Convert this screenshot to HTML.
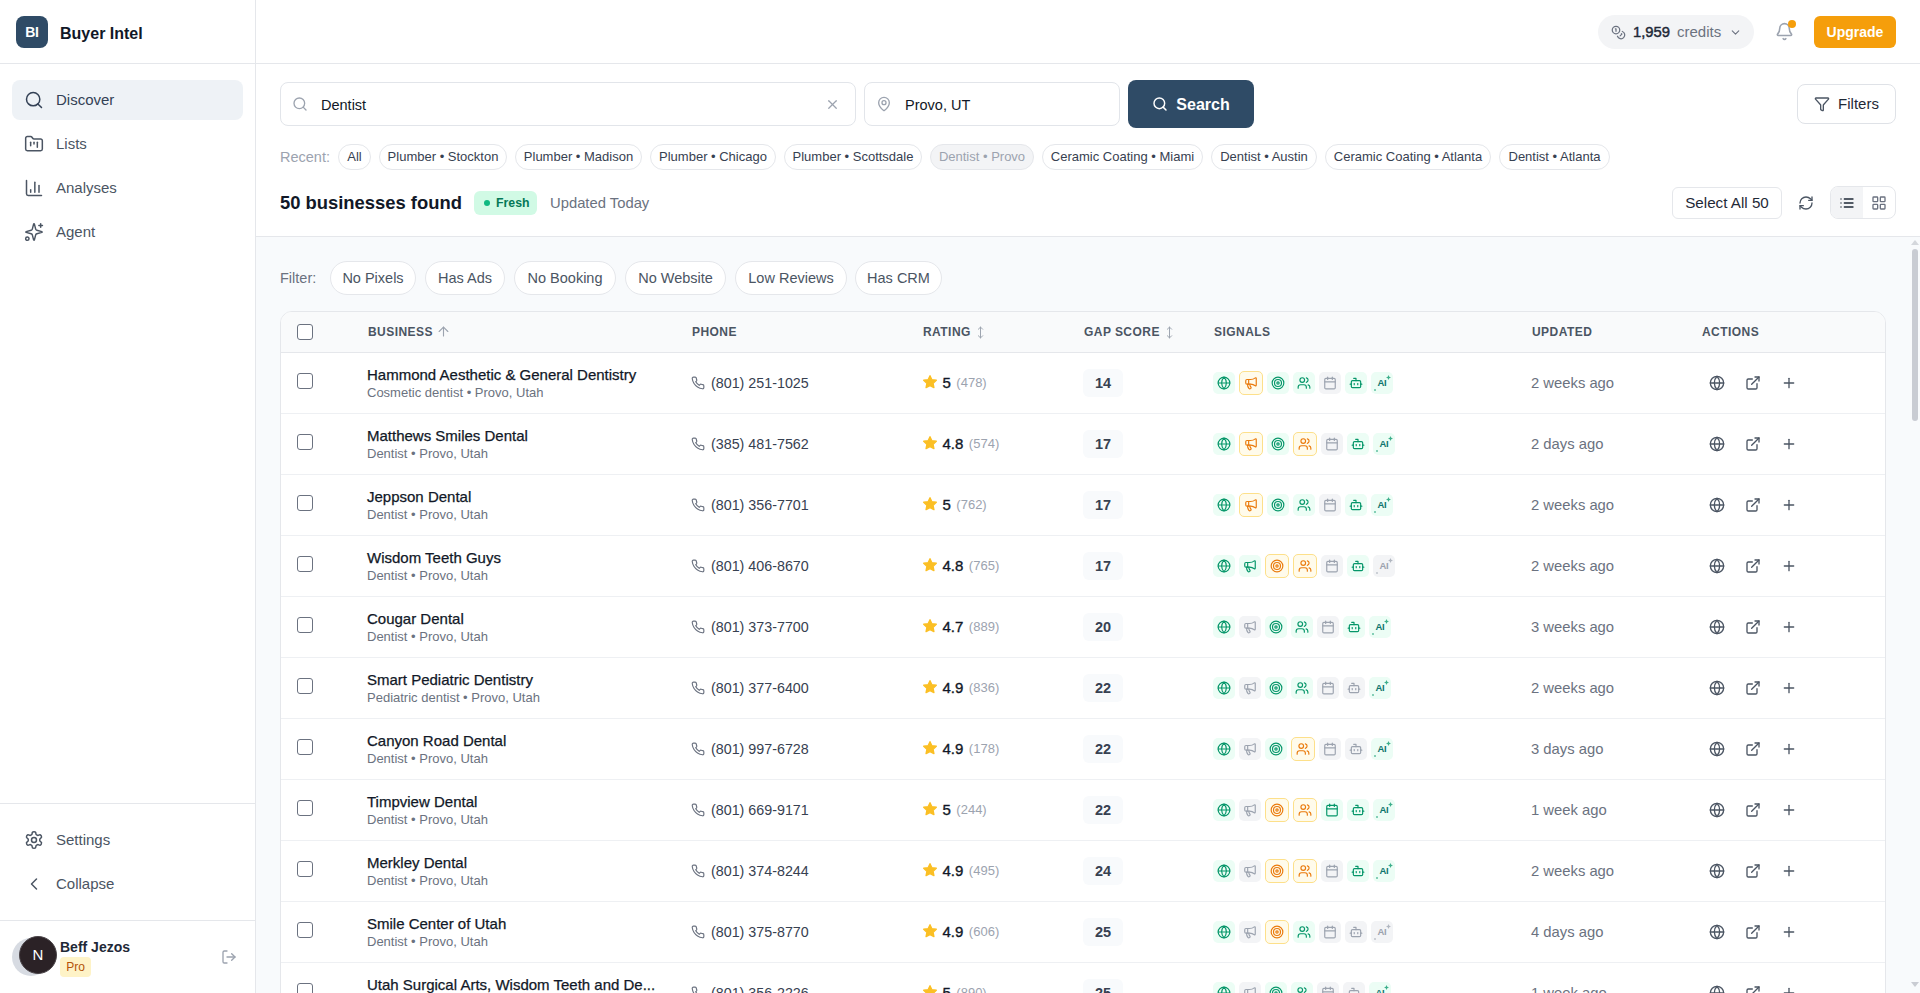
<!DOCTYPE html>
<html><head><meta charset="utf-8"><title>Buyer Intel</title>
<style>
*{box-sizing:border-box;margin:0;padding:0}
html,body{width:1920px;height:993px;overflow:hidden;background:#fff;font-family:"Liberation Sans",sans-serif;color:#111827}
.ic{fill:none;stroke:currentColor;stroke-width:2;stroke-linecap:round;stroke-linejoin:round;display:block;flex:none}
.hline{position:absolute;height:1px;background:#e5e7eb}
#side{position:absolute;left:0;top:0;width:256px;height:993px;border-right:1px solid #e5e7eb;background:#fff}
.logo{position:absolute;left:16px;top:16px;width:32px;height:32px;border-radius:8px;background:#2f4b66;color:#fff;font-weight:700;font-size:14px;line-height:32px;text-align:center;letter-spacing:-0.3px}
.brand{position:absolute;left:60px;top:23.5px;font-size:16px;line-height:20px;font-weight:700;color:#111827}
.nav{position:absolute;left:12px;width:231px;height:40px;border-radius:8px;display:flex;align-items:center;padding-left:12px;padding-bottom:1px;color:#4b5563;font-size:15px}
.nav .ic{width:20px;height:20px;margin-right:12px;stroke-width:1.8}
.nav.act{background:#eef2f6;color:#334155}
.av2{position:absolute;left:12px;top:938px;width:38px;height:38px;border-radius:50%;background:#d7dbe2}
.av{position:absolute;left:19px;top:936px;width:38px;height:38px;border-radius:50%;background:#2b2226;border:1.5px solid #4a4448;color:#fff;font-size:15px;line-height:35px;text-align:center}
.uname{position:absolute;left:60px;top:939px;font-size:14px;line-height:17px;font-weight:700;color:#1f2937}
.pro{position:absolute;left:60px;top:957px;width:31px;height:20px;border-radius:4px;background:#fef3c7;color:#b45309;font-size:12px;line-height:20px;text-align:center}
.logout{position:absolute;left:221px;top:949px;color:#9ca3af}
#hdr{position:absolute;left:256px;top:0;width:1664px;height:64px;border-bottom:1px solid #e5e7eb;background:#fff}
.credits{position:absolute;left:1342px;top:15px;width:156px;height:34px;border-radius:17px;background:#f3f4f6;display:flex;align-items:center;padding-left:14px;font-size:14px}
.credits .coin{color:#6b7280;margin-right:7px;margin-left:-1px;width:15px;height:15px}
.credits b{color:#1f2937;font-weight:400;-webkit-text-stroke:0.45px #1f2937;margin-right:7px;font-size:14.8px;margin-top:-0.5px}
.credits span{color:#6b7280;font-size:15px;margin-top:-1px}
.credits .chev{color:#6b7280;margin-left:8px;width:13px;height:13px}
.bell{position:absolute;left:1519px;top:22px;color:#9ca3af}
.bell i{position:absolute;left:13px;top:-2px;width:8px;height:8px;border-radius:50%;background:#f59e0b}
.upg{position:absolute;left:1558px;top:16px;width:82px;height:32px;border-radius:6px;background:#f59e0b;color:#fff;font-weight:700;font-size:14px;line-height:32px;text-align:center}
#top{position:absolute;left:256px;top:64px;width:1664px;height:173px;border-bottom:1px solid #e5e7eb;background:#fff}
.inp{position:absolute;top:18px;height:44px;border:1px solid #e2e5ea;border-radius:8px;display:flex;align-items:center;padding-left:11px;font-size:14.5px;color:#111827}
.inp .val{margin-top:1.5px}
.inp .sic{color:#9ca3af;margin-right:13px;margin-top:-0.5px}
.inp .xic{position:absolute;right:15.5px;top:14px;color:#9ca3af;width:15px;height:15px}
.sbtn{position:absolute;left:872px;top:16px;width:126px;height:48px;border-radius:8px;background:#2f4b66;color:#fff;display:flex;align-items:center;justify-content:center;font-weight:700;font-size:16px}
.sbtn .ic{margin-right:8px;stroke-width:2.2}
.sbtn span{margin-top:1.5px}
.fbtn{position:absolute;left:1541px;top:20px;width:99px;height:40px;border-radius:8px;border:1px solid #dfe2e7;display:flex;align-items:center;justify-content:center;font-size:15px;color:#1f2937}
.fbtn .ic{margin-right:8px;color:#4b5563}
.fbtn span{margin-top:-1px}
.rlabel{position:absolute;left:24px;top:85px;font-size:14.5px;line-height:16px;color:#9ca3af}
.chip{position:absolute;top:80px;height:26px;border:1px solid #e5e7eb;border-radius:13px;font-size:13px;line-height:24px;text-align:center;color:#374151;white-space:nowrap;background:#fff}
.chip.dis{background:#f3f4f6;color:#9ca3af}
.found{position:absolute;left:24px;top:128px;font-size:18.4px;line-height:22px;font-weight:700;color:#111827}
.fresh{position:absolute;left:218px;top:127px;width:63px;height:24px;border-radius:6px;background:#d1fae5;color:#047857;font-size:12.3px;font-weight:700;line-height:24px;padding-left:22px}
.fresh i{position:absolute;left:10px;top:9px;width:6px;height:6px;border-radius:50%;background:#10b981}
.updt{position:absolute;left:294px;top:131px;font-size:14.8px;line-height:16px;color:#6b7280}
.selall{position:absolute;left:1416px;top:123px;width:110px;height:32px;border:1px solid #e5e7eb;border-radius:6px;font-size:15.2px;line-height:30px;text-align:center;color:#1f2937}
.refr{position:absolute;left:1542px;top:131px;color:#4b5563}
.vt{position:absolute;left:1574px;top:122px;width:66px;height:33px;border:1px solid #e5e7eb;border-radius:8px;display:flex;overflow:hidden}
.vt span{flex:1;display:flex;align-items:center;justify-content:center;color:#6b7280}
.vt span.on{background:#f3f4f6;color:#1f2937}
#main{position:absolute;left:256px;top:237px;width:1664px;height:756px;background:#f8fafc;overflow:hidden}
.flabel{position:absolute;left:24px;top:33px;font-size:14.5px;line-height:16px;color:#6b7280}
.fchip{position:absolute;top:24px;height:34px;border:1px solid #e5e7eb;border-radius:17px;background:#fff;font-size:14.5px;line-height:32px;text-align:center;color:#4b5563;white-space:nowrap}
#card{position:absolute;left:24px;top:74px;width:1606px;height:800px;border:1px solid #e5e7eb;border-radius:12px;background:#fff;overflow:hidden}
.thead{position:absolute;left:0;top:0;width:100%;height:41px;border-bottom:1px solid #e5e7eb;background:#f9fafb}
.cb{position:absolute;width:16px;height:16px;border:1.5px solid #6b7280;border-radius:3px;background:#fff}
.th{position:absolute;top:13px;font-size:12px;line-height:14px;font-weight:700;color:#4b5563;letter-spacing:0.45px;display:flex;align-items:center;white-space:nowrap}
.th .sort{color:#9ca3af;margin-left:3px;width:13px;height:13px;stroke-width:1.8}
.th .sort.up{width:15px;height:15px;margin-top:-1px}
.row{position:absolute;left:0;width:100%;height:61px;border-bottom:1px solid #eef0f3}
.nm{position:absolute;left:86px;top:13px;font-size:15px;line-height:17px;color:#111827;white-space:nowrap;-webkit-text-stroke:0.25px #111827}
.sub{position:absolute;left:86px;top:32px;font-size:13px;line-height:15px;color:#6b7280;white-space:nowrap}
.ph{position:absolute;left:410px;top:22px;display:flex;align-items:center;font-size:14.3px;color:#374151}
.ph .phi{color:#6b7280;margin-right:6px}
.rt{position:absolute;left:641px;top:20.5px;display:flex;align-items:center;font-size:14.5px;white-space:nowrap}
.rt .star{color:#fbbf24;margin-right:5px;width:16px;height:16px;margin-left:-0.5px}
.rt b{font-weight:400;-webkit-text-stroke:0.35px #111827;font-size:15px;color:#111827;margin-right:5.5px}
.rt .cnt{font-size:13px;color:#9ca3af}
.gap{position:absolute;left:802px;top:16px;width:40px;height:28px;border-radius:6px;background:#f8fafc;font-weight:700;font-size:14.5px;line-height:28px;text-align:center;color:#374151}
.sigs{position:absolute;left:932px;top:18px;display:flex;align-items:center;height:24px}
.sig{position:relative;width:22px;height:22px;border-radius:5px;margin-right:4px;display:flex;align-items:center;justify-content:center}
.sig .ic{width:14px;height:14px}
.sg{background:#ecfdf5;color:#059669}
.so{background:#fffbeb;color:#ea7a0c;border:1px solid #fde08a;width:24px;height:24px}
.sn{background:#f3f4f6;color:#9ca3af}
.ai{font-size:9.5px;font-weight:700;letter-spacing:-0.2px;line-height:10px;margin-top:-1px}
.sg .ai{color:#0f766e}
.aisp{position:absolute;right:2.5px;top:2.5px;opacity:.75}
.aidot{position:absolute;left:2.8px;bottom:2.8px;width:2.5px;height:2.5px;border-radius:50%;background:currentColor;opacity:.6}
.upd{position:absolute;left:1250px;top:22px;font-size:14.8px;line-height:16px;color:#6b7280;white-space:nowrap}
.acts{position:absolute;left:1428px;top:22px;display:flex;color:#4b5563}
.acts .ic{margin-right:20px}
.sbar{position:absolute;left:1649px;top:0;width:15px;height:756px}
.thumb{position:absolute;left:7px;top:12px;width:6px;height:172px;border-radius:3px;background:#c9ccd3}
.sup{position:absolute;left:6px;top:3px;width:0;height:0;border-left:4px solid transparent;border-right:4px solid transparent;border-bottom:5px solid #d4d7dc}
.sdn{position:absolute;left:6px;top:745px;width:0;height:0;border-left:4px solid transparent;border-right:4px solid transparent;border-top:5px solid #c9ccd3}

</style></head><body>
<svg width="0" height="0" style="position:absolute">
<defs>
<symbol id="i-search" viewBox="0 0 24 24"><circle cx="11" cy="11" r="8"/><path d="m21 21-4.3-4.3"/></symbol>
<symbol id="i-folder" viewBox="0 0 24 24"><path d="M4 20h16a2 2 0 0 0 2-2V8a2 2 0 0 0-2-2h-7.93a2 2 0 0 1-1.66-.9l-.82-1.2A2 2 0 0 0 7.93 3H4a2 2 0 0 0-2 2v13c0 1.1.9 2 2 2Z"/><path d="M8 10v4"/><path d="M12 10v2"/><path d="M16 10v6"/></symbol>
<symbol id="i-chart" viewBox="0 0 24 24"><path d="M3 3v16a2 2 0 0 0 2 2h16"/><path d="M8 17v-3"/><path d="M13 17V5"/><path d="M18 17V9"/></symbol>
<symbol id="i-spark" viewBox="0 0 24 24"><path transform="translate(12 12) scale(.98) translate(-12 -12)" d="M9.937 15.5A2 2 0 0 0 8.5 14.063l-6.135-1.582a.5.5 0 0 1 0-.962L8.5 9.936A2 2 0 0 0 9.937 8.5l1.582-6.135a.5.5 0 0 1 .963 0L14.063 8.5A2 2 0 0 0 15.5 9.937l6.135 1.581a.5.5 0 0 1 0 .964L15.5 14.063a2 2 0 0 0-1.437 1.437l-1.582 6.135a.5.5 0 0 1-.963 0z"/><path d="M20 2v4.3"/><path d="M17.85 4.15h4.3"/><circle cx="4" cy="20" r="2"/></symbol>
<symbol id="i-gear" viewBox="0 0 24 24"><path d="M12.22 2h-.44a2 2 0 0 0-2 2v.18a2 2 0 0 1-1 1.73l-.43.25a2 2 0 0 1-2 0l-.15-.08a2 2 0 0 0-2.73.73l-.22.38a2 2 0 0 0 .73 2.730l.15.1a2 2 0 0 1 1 1.72v.51a2 2 0 0 1-1 1.74l-.15.09a2 2 0 0 0-.73 2.73l.22.38a2 2 0 0 0 2.73.73l.15-.08a2 2 0 0 1 2 0l.43.25a2 2 0 0 1 1 1.73V20a2 2 0 0 0 2 2h.44a2 2 0 0 0 2-2v-.18a2 2 0 0 1 1-1.73l.43-.25a2 2 0 0 1 2 0l.15.08a2 2 0 0 0 2.73-.73l.22-.39a2 2 0 0 0-.73-2.73l-.15-.08a2 2 0 0 1-1-1.74v-.5a2 2 0 0 1 1-1.74l.15-.09a2 2 0 0 0 .73-2.73l-.22-.38a2 2 0 0 0-2.73-.73l-.15.08a2 2 0 0 1-2 0l-.43-.25a2 2 0 0 1-1-1.730V4a2 2 0 0 0-2-2z"/><circle cx="12" cy="12" r="3"/></symbol>
<symbol id="i-chevl" viewBox="0 0 24 24"><path d="m15 18-6-6 6-6"/></symbol>
<symbol id="i-logout" viewBox="0 0 24 24"><path d="M9 21H5a2 2 0 0 1-2-2V5a2 2 0 0 1 2-2h4"/><path d="m16 17 5-5-5-5"/><path d="M21 12H9"/></symbol>
<symbol id="i-coins" viewBox="0 0 24 24"><circle cx="8" cy="8" r="6"/><path d="M18.09 10.37A6 6 0 1 1 10.34 18"/><path d="M7 6h1v4"/><path d="m16.71 13.88.7.71-2.82 2.82"/></symbol>
<symbol id="i-chevd" viewBox="0 0 24 24"><path d="m6 9 6 6 6-6"/></symbol>
<symbol id="i-bell" viewBox="0 0 24 24"><path d="M10.268 21a2 2 0 0 0 3.464 0"/><path d="M3.262 15.326A1 1 0 0 0 4 17h16a1 1 0 0 0 .74-1.673C19.41 13.956 18 12.499 18 8A6 6 0 0 0 6 8c0 4.499-1.411 5.956-2.738 7.326"/></symbol>
<symbol id="i-x" viewBox="0 0 24 24"><path d="M18 6 6 18"/><path d="m6 6 12 12"/></symbol>
<symbol id="i-pin" viewBox="0 0 24 24"><path d="M20 10c0 4.993-5.539 10.193-7.399 11.799a1 1 0 0 1-1.202 0C9.539 20.193 4 14.993 4 10a8 8 0 0 1 16 0"/><circle cx="12" cy="10" r="3"/></symbol>
<symbol id="i-funnel" viewBox="0 0 24 24"><path d="M10 20a1 1 0 0 0 .553.895l2 1A1 1 0 0 0 14 21v-7a2 2 0 0 1 .517-1.341L21.74 4.67A1 1 0 0 0 21 3H3a1 1 0 0 0-.742 1.67l7.225 7.989A2 2 0 0 1 10 14z"/></symbol>
<symbol id="i-refresh" viewBox="0 0 24 24"><path d="M3 12a9 9 0 0 1 9-9 9.75 9.75 0 0 1 6.74 2.74L21 8"/><path d="M21 3v5h-5"/><path d="M21 12a9 9 0 0 1-9 9 9.75 9.75 0 0 1-6.74-2.74L3 16"/><path d="M8 16H3v5"/></symbol>
<symbol id="i-list" viewBox="0 0 24 24"><path d="M3 12h.01"/><path d="M3 18h.01"/><path d="M3 6h.01"/><path d="M8 12h13"/><path d="M8 18h13"/><path d="M8 6h13"/></symbol>
<symbol id="i-grid" viewBox="0 0 24 24"><rect width="7" height="7" x="3" y="3" rx="1"/><rect width="7" height="7" x="14" y="3" rx="1"/><rect width="7" height="7" x="14" y="14" rx="1"/><rect width="7" height="7" x="3" y="14" rx="1"/></symbol>
<symbol id="i-globe" viewBox="0 0 24 24"><circle cx="12" cy="12" r="10"/><path d="M12 2a14.5 14.5 0 0 0 0 20 14.5 14.5 0 0 0 0-20"/><path d="M2 12h20"/></symbol>
<symbol id="i-mega" viewBox="0 0 24 24"><path d="M11 6a13 13 0 0 0 8.4-2.8A1 1 0 0 1 21 4v12a1 1 0 0 1-1.6.8A13 13 0 0 0 11 14H5a2 2 0 0 1-2-2V8a2 2 0 0 1 2-2z"/><path d="M6 14a12 12 0 0 0 2.4 7.2 2 2 0 0 0 3.2-2.4A8 8 0 0 1 10 14"/><path d="M8 6v8"/></symbol>
<symbol id="i-target" viewBox="0 0 24 24"><circle cx="12" cy="12" r="10"/><circle cx="12" cy="12" r="6"/><circle cx="12" cy="12" r="2"/></symbol>
<symbol id="i-users" viewBox="0 0 24 24"><path d="M16 21v-2a4 4 0 0 0-4-4H6a4 4 0 0 0-4 4v2"/><circle cx="9" cy="7" r="4"/><path d="M22 21v-2a4 4 0 0 0-3-3.87"/><path d="M16 3.13a4 4 0 0 1 0 7.75"/></symbol>
<symbol id="i-cal" viewBox="0 0 24 24"><path d="M8 2v4"/><path d="M16 2v4"/><rect width="18" height="18" x="3" y="4" rx="2"/><path d="M3 10h18"/></symbol>
<symbol id="i-bot" viewBox="0 0 24 24"><path d="M12 8V4H8"/><rect width="16" height="12" x="4" y="8" rx="2"/><path d="M2 14h2"/><path d="M20 14h2"/><path d="M15 13v2"/><path d="M9 13v2"/></symbol>
<symbol id="i-phone" viewBox="0 0 24 24"><path d="M22 16.92v3a2 2 0 0 1-2.18 2 19.79 19.790 0 0 1-8.63-3.07 19.5 19.5 0 0 1-6-6 19.79 19.79 0 0 1-3.07-8.67A2 2 0 0 1 4.11 2h3a2 2 0 0 1 2 1.72 12.84 12.84 0 0 0 .7 2.81 2 2 0 0 1-.45 2.11L8.09 9.91a16 16 0 0 0 6 6l1.270-1.27a2 2 0 0 1 2.11-.45 12.84 12.84 0 0 0 2.81.7A2 2 0 0 1 22 16.92z"/></symbol>
<symbol id="i-star" viewBox="0 0 24 24"><path fill="currentColor" stroke-linejoin="round" d="M12 2.5l2.9 6 6.6.9-4.8 4.6 1.2 6.5L12 17.4l-5.9 3.1 1.2-6.5-4.8-4.6 6.6-.9z"/></symbol>
<symbol id="i-ext" viewBox="0 0 24 24"><path d="M15 3h6v6"/><path d="M10 14 21 3"/><path d="M18 13v6a2 2 0 0 1-2 2H5a2 2 0 0 1-2-2V8a2 2 0 0 1 2-2h6"/></symbol>
<symbol id="i-plus" viewBox="0 0 24 24"><path d="M5 12h14"/><path d="M12 5v14"/></symbol>
<symbol id="i-up" viewBox="0 0 24 24"><path d="m5 12 7-7 7 7"/><path d="M12 19V5"/></symbol>
<symbol id="i-updown" viewBox="0 0 24 24"><path d="m8 6 4-4 4 4"/><path d="M12 2v20"/><path d="m8 18 4 4 4-4"/></symbol>
</defs></svg>
<div id="side">
  <div class="logo">BI</div><div class="brand">Buyer Intel</div>
  <div class="hline" style="top:63px;left:0;width:256px"></div>
  <div class="nav act" style="top:80px"><svg class="ic " width="20" height="20"><use href="#i-search"/></svg><span>Discover</span></div>
  <div class="nav" style="top:124px"><svg class="ic " width="20" height="20"><use href="#i-folder"/></svg><span>Lists</span></div>
  <div class="nav" style="top:168px"><svg class="ic " width="20" height="20"><use href="#i-chart"/></svg><span>Analyses</span></div>
  <div class="nav" style="top:212px"><svg class="ic " width="20" height="20"><use href="#i-spark"/></svg><span>Agent</span></div>
  <div class="hline" style="top:803px;left:0;width:255px"></div>
  <div class="nav" style="top:820px"><svg class="ic " width="20" height="20"><use href="#i-gear"/></svg><span>Settings</span></div>
  <div class="nav" style="top:864px"><svg class="ic " width="20" height="20"><use href="#i-chevl"/></svg><span>Collapse</span></div>
  <div class="hline" style="top:920px;left:0;width:255px"></div>
  <div class="av2"></div><div class="av">N</div>
  <div class="uname">Beff Jezos</div><div class="pro">Pro</div>
  <div class="logout"><svg class="ic " width="16" height="16"><use href="#i-logout"/></svg></div>
</div>
<div id="hdr">
  <div class="credits"><svg class="ic coin" width="14" height="14"><use href="#i-coins"/></svg><b>1,959</b><span>credits</span><svg class="ic chev" width="14" height="14"><use href="#i-chevd"/></svg></div>
  <div class="bell"><svg class="ic " width="19" height="19"><use href="#i-bell"/></svg><i></i></div>
  <div class="upg">Upgrade</div>
</div>
<div id="top">
  <div class="inp" style="left:24px;width:576px"><svg class="ic sic" width="16" height="16"><use href="#i-search"/></svg><span class="val">Dentist</span><svg class="ic xic" width="16" height="16"><use href="#i-x"/></svg></div>
  <div class="inp" style="left:608px;width:256px"><svg class="ic sic" width="16" height="16"><use href="#i-pin"/></svg><span class="val">Provo, UT</span></div>
  <div class="sbtn"><svg class="ic " width="16" height="16"><use href="#i-search"/></svg><span>Search</span></div>
  <div class="fbtn"><svg class="ic " width="16" height="16"><use href="#i-funnel"/></svg><span>Filters</span></div>
  <div class="rlabel">Recent:</div>
  <span class="chip" style="left:82px;width:33px">All</span><span class="chip" style="left:123px;width:128px">Plumber &bull; Stockton</span><span class="chip" style="left:259px;width:127px">Plumber &bull; Madison</span><span class="chip" style="left:394px;width:126px">Plumber &bull; Chicago</span><span class="chip" style="left:528px;width:138px">Plumber &bull; Scottsdale</span><span class="chip dis" style="left:674px;width:104px">Dentist &bull; Provo</span><span class="chip" style="left:786px;width:161px">Ceramic Coating &bull; Miami</span><span class="chip" style="left:955px;width:106px">Dentist &bull; Austin</span><span class="chip" style="left:1069px;width:166px">Ceramic Coating &bull; Atlanta</span><span class="chip" style="left:1243px;width:111px">Dentist &bull; Atlanta</span>
  <div class="found">50 businesses found</div>
  <div class="fresh"><i></i>Fresh</div>
  <div class="updt">Updated Today</div>
  <div class="selall">Select All 50</div>
  <div class="refr"><svg class="ic " width="16" height="16"><use href="#i-refresh"/></svg></div>
  <div class="vt"><span class="on"><svg class="ic " width="16" height="16"><use href="#i-list"/></svg></span><span><svg class="ic " width="16" height="16"><use href="#i-grid"/></svg></span></div>
</div>
<div id="main">
  <div class="flabel">Filter:</div>
  <span class="fchip" style="left:74px;width:86px">No Pixels</span><span class="fchip" style="left:169px;width:80px">Has Ads</span><span class="fchip" style="left:258px;width:102px">No Booking</span><span class="fchip" style="left:369px;width:101px">No Website</span><span class="fchip" style="left:479px;width:112px">Low Reviews</span><span class="fchip" style="left:599px;width:87px">Has CRM</span>
  <div id="card">
    <div class="thead">
      <span class="cb" style="left:16px;top:12px"></span>
      <span class="th" style="left:87px">BUSINESS<svg class="ic sort up" width="12" height="12"><use href="#i-up"/></svg></span>
      <span class="th" style="left:411px">PHONE</span>
      <span class="th" style="left:642px">RATING<svg class="ic sort" width="12" height="12"><use href="#i-updown"/></svg></span>
      <span class="th" style="left:803px">GAP SCORE<svg class="ic sort" width="12" height="12"><use href="#i-updown"/></svg></span>
      <span class="th" style="left:933px">SIGNALS</span>
      <span class="th" style="left:1251px">UPDATED</span>
      <span class="th" style="left:1421px">ACTIONS</span>
    </div>
    <div class="row" style="top:41px">
<span class="cb" style="left:16px;top:20px"></span>
<div class="nm">Hammond Aesthetic &amp; General Dentistry</div><div class="sub">Cosmetic dentist &bull; Provo, Utah</div>
<div class="ph"><svg class="ic phi" width="14" height="14"><use href="#i-phone"/></svg><span>(801) 251-1025</span></div>
<div class="rt"><svg class="ic star" width="15" height="15"><use href="#i-star"/></svg><b>5</b><span class="cnt">(478)</span></div>
<div class="gap">14</div>
<div class="sigs"><span class="sig sg"><svg class="ic " width="14" height="14"><use href="#i-globe"/></svg></span><span class="sig so"><svg class="ic " width="14" height="14"><use href="#i-mega"/></svg></span><span class="sig sg"><svg class="ic " width="14" height="14"><use href="#i-target"/></svg></span><span class="sig sg"><svg class="ic " width="14" height="14"><use href="#i-users"/></svg></span><span class="sig sn"><svg class="ic " width="14" height="14"><use href="#i-cal"/></svg></span><span class="sig sg"><svg class="ic " width="14" height="14"><use href="#i-bot"/></svg></span><span class="sig sg"><span class="ai">AI</span><svg class="aisp" width="5" height="5" viewBox="0 0 8 8"><path d="M4 0Q4.5 3.5 8 4Q4.5 4.5 4 8Q3.5 4.5 0 4Q3.5 3.5 4 0Z" fill="currentColor"/></svg><i class="aidot"></i></span></div>
<div class="upd">2 weeks ago</div>
<div class="acts"><svg class="ic " width="16" height="16"><use href="#i-globe"/></svg><svg class="ic " width="16" height="16"><use href="#i-ext"/></svg><svg class="ic " width="16" height="16"><use href="#i-plus"/></svg></div>
</div><div class="row" style="top:102px">
<span class="cb" style="left:16px;top:20px"></span>
<div class="nm">Matthews Smiles Dental</div><div class="sub">Dentist &bull; Provo, Utah</div>
<div class="ph"><svg class="ic phi" width="14" height="14"><use href="#i-phone"/></svg><span>(385) 481-7562</span></div>
<div class="rt"><svg class="ic star" width="15" height="15"><use href="#i-star"/></svg><b>4.8</b><span class="cnt">(574)</span></div>
<div class="gap">17</div>
<div class="sigs"><span class="sig sg"><svg class="ic " width="14" height="14"><use href="#i-globe"/></svg></span><span class="sig so"><svg class="ic " width="14" height="14"><use href="#i-mega"/></svg></span><span class="sig sg"><svg class="ic " width="14" height="14"><use href="#i-target"/></svg></span><span class="sig so"><svg class="ic " width="14" height="14"><use href="#i-users"/></svg></span><span class="sig sn"><svg class="ic " width="14" height="14"><use href="#i-cal"/></svg></span><span class="sig sg"><svg class="ic " width="14" height="14"><use href="#i-bot"/></svg></span><span class="sig sg"><span class="ai">AI</span><svg class="aisp" width="5" height="5" viewBox="0 0 8 8"><path d="M4 0Q4.5 3.5 8 4Q4.5 4.5 4 8Q3.5 4.5 0 4Q3.5 3.5 4 0Z" fill="currentColor"/></svg><i class="aidot"></i></span></div>
<div class="upd">2 days ago</div>
<div class="acts"><svg class="ic " width="16" height="16"><use href="#i-globe"/></svg><svg class="ic " width="16" height="16"><use href="#i-ext"/></svg><svg class="ic " width="16" height="16"><use href="#i-plus"/></svg></div>
</div><div class="row" style="top:163px">
<span class="cb" style="left:16px;top:20px"></span>
<div class="nm">Jeppson Dental</div><div class="sub">Dentist &bull; Provo, Utah</div>
<div class="ph"><svg class="ic phi" width="14" height="14"><use href="#i-phone"/></svg><span>(801) 356-7701</span></div>
<div class="rt"><svg class="ic star" width="15" height="15"><use href="#i-star"/></svg><b>5</b><span class="cnt">(762)</span></div>
<div class="gap">17</div>
<div class="sigs"><span class="sig sg"><svg class="ic " width="14" height="14"><use href="#i-globe"/></svg></span><span class="sig so"><svg class="ic " width="14" height="14"><use href="#i-mega"/></svg></span><span class="sig sg"><svg class="ic " width="14" height="14"><use href="#i-target"/></svg></span><span class="sig sg"><svg class="ic " width="14" height="14"><use href="#i-users"/></svg></span><span class="sig sn"><svg class="ic " width="14" height="14"><use href="#i-cal"/></svg></span><span class="sig sg"><svg class="ic " width="14" height="14"><use href="#i-bot"/></svg></span><span class="sig sg"><span class="ai">AI</span><svg class="aisp" width="5" height="5" viewBox="0 0 8 8"><path d="M4 0Q4.5 3.5 8 4Q4.5 4.5 4 8Q3.5 4.5 0 4Q3.5 3.5 4 0Z" fill="currentColor"/></svg><i class="aidot"></i></span></div>
<div class="upd">2 weeks ago</div>
<div class="acts"><svg class="ic " width="16" height="16"><use href="#i-globe"/></svg><svg class="ic " width="16" height="16"><use href="#i-ext"/></svg><svg class="ic " width="16" height="16"><use href="#i-plus"/></svg></div>
</div><div class="row" style="top:224px">
<span class="cb" style="left:16px;top:20px"></span>
<div class="nm">Wisdom Teeth Guys</div><div class="sub">Dentist &bull; Provo, Utah</div>
<div class="ph"><svg class="ic phi" width="14" height="14"><use href="#i-phone"/></svg><span>(801) 406-8670</span></div>
<div class="rt"><svg class="ic star" width="15" height="15"><use href="#i-star"/></svg><b>4.8</b><span class="cnt">(765)</span></div>
<div class="gap">17</div>
<div class="sigs"><span class="sig sg"><svg class="ic " width="14" height="14"><use href="#i-globe"/></svg></span><span class="sig sg"><svg class="ic " width="14" height="14"><use href="#i-mega"/></svg></span><span class="sig so"><svg class="ic " width="14" height="14"><use href="#i-target"/></svg></span><span class="sig so"><svg class="ic " width="14" height="14"><use href="#i-users"/></svg></span><span class="sig sn"><svg class="ic " width="14" height="14"><use href="#i-cal"/></svg></span><span class="sig sg"><svg class="ic " width="14" height="14"><use href="#i-bot"/></svg></span><span class="sig sn"><span class="ai">AI</span><svg class="aisp" width="5" height="5" viewBox="0 0 8 8"><path d="M4 0Q4.5 3.5 8 4Q4.5 4.5 4 8Q3.5 4.5 0 4Q3.5 3.5 4 0Z" fill="currentColor"/></svg><i class="aidot"></i></span></div>
<div class="upd">2 weeks ago</div>
<div class="acts"><svg class="ic " width="16" height="16"><use href="#i-globe"/></svg><svg class="ic " width="16" height="16"><use href="#i-ext"/></svg><svg class="ic " width="16" height="16"><use href="#i-plus"/></svg></div>
</div><div class="row" style="top:285px">
<span class="cb" style="left:16px;top:20px"></span>
<div class="nm">Cougar Dental</div><div class="sub">Dentist &bull; Provo, Utah</div>
<div class="ph"><svg class="ic phi" width="14" height="14"><use href="#i-phone"/></svg><span>(801) 373-7700</span></div>
<div class="rt"><svg class="ic star" width="15" height="15"><use href="#i-star"/></svg><b>4.7</b><span class="cnt">(889)</span></div>
<div class="gap">20</div>
<div class="sigs"><span class="sig sg"><svg class="ic " width="14" height="14"><use href="#i-globe"/></svg></span><span class="sig sn"><svg class="ic " width="14" height="14"><use href="#i-mega"/></svg></span><span class="sig sg"><svg class="ic " width="14" height="14"><use href="#i-target"/></svg></span><span class="sig sg"><svg class="ic " width="14" height="14"><use href="#i-users"/></svg></span><span class="sig sn"><svg class="ic " width="14" height="14"><use href="#i-cal"/></svg></span><span class="sig sg"><svg class="ic " width="14" height="14"><use href="#i-bot"/></svg></span><span class="sig sg"><span class="ai">AI</span><svg class="aisp" width="5" height="5" viewBox="0 0 8 8"><path d="M4 0Q4.5 3.5 8 4Q4.5 4.5 4 8Q3.5 4.5 0 4Q3.5 3.5 4 0Z" fill="currentColor"/></svg><i class="aidot"></i></span></div>
<div class="upd">3 weeks ago</div>
<div class="acts"><svg class="ic " width="16" height="16"><use href="#i-globe"/></svg><svg class="ic " width="16" height="16"><use href="#i-ext"/></svg><svg class="ic " width="16" height="16"><use href="#i-plus"/></svg></div>
</div><div class="row" style="top:346px">
<span class="cb" style="left:16px;top:20px"></span>
<div class="nm">Smart Pediatric Dentistry</div><div class="sub">Pediatric dentist &bull; Provo, Utah</div>
<div class="ph"><svg class="ic phi" width="14" height="14"><use href="#i-phone"/></svg><span>(801) 377-6400</span></div>
<div class="rt"><svg class="ic star" width="15" height="15"><use href="#i-star"/></svg><b>4.9</b><span class="cnt">(836)</span></div>
<div class="gap">22</div>
<div class="sigs"><span class="sig sg"><svg class="ic " width="14" height="14"><use href="#i-globe"/></svg></span><span class="sig sn"><svg class="ic " width="14" height="14"><use href="#i-mega"/></svg></span><span class="sig sg"><svg class="ic " width="14" height="14"><use href="#i-target"/></svg></span><span class="sig sg"><svg class="ic " width="14" height="14"><use href="#i-users"/></svg></span><span class="sig sn"><svg class="ic " width="14" height="14"><use href="#i-cal"/></svg></span><span class="sig sn"><svg class="ic " width="14" height="14"><use href="#i-bot"/></svg></span><span class="sig sg"><span class="ai">AI</span><svg class="aisp" width="5" height="5" viewBox="0 0 8 8"><path d="M4 0Q4.5 3.5 8 4Q4.5 4.5 4 8Q3.5 4.5 0 4Q3.5 3.5 4 0Z" fill="currentColor"/></svg><i class="aidot"></i></span></div>
<div class="upd">2 weeks ago</div>
<div class="acts"><svg class="ic " width="16" height="16"><use href="#i-globe"/></svg><svg class="ic " width="16" height="16"><use href="#i-ext"/></svg><svg class="ic " width="16" height="16"><use href="#i-plus"/></svg></div>
</div><div class="row" style="top:407px">
<span class="cb" style="left:16px;top:20px"></span>
<div class="nm">Canyon Road Dental</div><div class="sub">Dentist &bull; Provo, Utah</div>
<div class="ph"><svg class="ic phi" width="14" height="14"><use href="#i-phone"/></svg><span>(801) 997-6728</span></div>
<div class="rt"><svg class="ic star" width="15" height="15"><use href="#i-star"/></svg><b>4.9</b><span class="cnt">(178)</span></div>
<div class="gap">22</div>
<div class="sigs"><span class="sig sg"><svg class="ic " width="14" height="14"><use href="#i-globe"/></svg></span><span class="sig sn"><svg class="ic " width="14" height="14"><use href="#i-mega"/></svg></span><span class="sig sg"><svg class="ic " width="14" height="14"><use href="#i-target"/></svg></span><span class="sig so"><svg class="ic " width="14" height="14"><use href="#i-users"/></svg></span><span class="sig sn"><svg class="ic " width="14" height="14"><use href="#i-cal"/></svg></span><span class="sig sn"><svg class="ic " width="14" height="14"><use href="#i-bot"/></svg></span><span class="sig sg"><span class="ai">AI</span><svg class="aisp" width="5" height="5" viewBox="0 0 8 8"><path d="M4 0Q4.5 3.5 8 4Q4.5 4.5 4 8Q3.5 4.5 0 4Q3.5 3.5 4 0Z" fill="currentColor"/></svg><i class="aidot"></i></span></div>
<div class="upd">3 days ago</div>
<div class="acts"><svg class="ic " width="16" height="16"><use href="#i-globe"/></svg><svg class="ic " width="16" height="16"><use href="#i-ext"/></svg><svg class="ic " width="16" height="16"><use href="#i-plus"/></svg></div>
</div><div class="row" style="top:468px">
<span class="cb" style="left:16px;top:20px"></span>
<div class="nm">Timpview Dental</div><div class="sub">Dentist &bull; Provo, Utah</div>
<div class="ph"><svg class="ic phi" width="14" height="14"><use href="#i-phone"/></svg><span>(801) 669-9171</span></div>
<div class="rt"><svg class="ic star" width="15" height="15"><use href="#i-star"/></svg><b>5</b><span class="cnt">(244)</span></div>
<div class="gap">22</div>
<div class="sigs"><span class="sig sg"><svg class="ic " width="14" height="14"><use href="#i-globe"/></svg></span><span class="sig sn"><svg class="ic " width="14" height="14"><use href="#i-mega"/></svg></span><span class="sig so"><svg class="ic " width="14" height="14"><use href="#i-target"/></svg></span><span class="sig so"><svg class="ic " width="14" height="14"><use href="#i-users"/></svg></span><span class="sig sg"><svg class="ic " width="14" height="14"><use href="#i-cal"/></svg></span><span class="sig sg"><svg class="ic " width="14" height="14"><use href="#i-bot"/></svg></span><span class="sig sg"><span class="ai">AI</span><svg class="aisp" width="5" height="5" viewBox="0 0 8 8"><path d="M4 0Q4.5 3.5 8 4Q4.5 4.5 4 8Q3.5 4.5 0 4Q3.5 3.5 4 0Z" fill="currentColor"/></svg><i class="aidot"></i></span></div>
<div class="upd">1 week ago</div>
<div class="acts"><svg class="ic " width="16" height="16"><use href="#i-globe"/></svg><svg class="ic " width="16" height="16"><use href="#i-ext"/></svg><svg class="ic " width="16" height="16"><use href="#i-plus"/></svg></div>
</div><div class="row" style="top:529px">
<span class="cb" style="left:16px;top:20px"></span>
<div class="nm">Merkley Dental</div><div class="sub">Dentist &bull; Provo, Utah</div>
<div class="ph"><svg class="ic phi" width="14" height="14"><use href="#i-phone"/></svg><span>(801) 374-8244</span></div>
<div class="rt"><svg class="ic star" width="15" height="15"><use href="#i-star"/></svg><b>4.9</b><span class="cnt">(495)</span></div>
<div class="gap">24</div>
<div class="sigs"><span class="sig sg"><svg class="ic " width="14" height="14"><use href="#i-globe"/></svg></span><span class="sig sn"><svg class="ic " width="14" height="14"><use href="#i-mega"/></svg></span><span class="sig so"><svg class="ic " width="14" height="14"><use href="#i-target"/></svg></span><span class="sig so"><svg class="ic " width="14" height="14"><use href="#i-users"/></svg></span><span class="sig sn"><svg class="ic " width="14" height="14"><use href="#i-cal"/></svg></span><span class="sig sg"><svg class="ic " width="14" height="14"><use href="#i-bot"/></svg></span><span class="sig sg"><span class="ai">AI</span><svg class="aisp" width="5" height="5" viewBox="0 0 8 8"><path d="M4 0Q4.5 3.5 8 4Q4.5 4.5 4 8Q3.5 4.5 0 4Q3.5 3.5 4 0Z" fill="currentColor"/></svg><i class="aidot"></i></span></div>
<div class="upd">2 weeks ago</div>
<div class="acts"><svg class="ic " width="16" height="16"><use href="#i-globe"/></svg><svg class="ic " width="16" height="16"><use href="#i-ext"/></svg><svg class="ic " width="16" height="16"><use href="#i-plus"/></svg></div>
</div><div class="row" style="top:590px">
<span class="cb" style="left:16px;top:20px"></span>
<div class="nm">Smile Center of Utah</div><div class="sub">Dentist &bull; Provo, Utah</div>
<div class="ph"><svg class="ic phi" width="14" height="14"><use href="#i-phone"/></svg><span>(801) 375-8770</span></div>
<div class="rt"><svg class="ic star" width="15" height="15"><use href="#i-star"/></svg><b>4.9</b><span class="cnt">(606)</span></div>
<div class="gap">25</div>
<div class="sigs"><span class="sig sg"><svg class="ic " width="14" height="14"><use href="#i-globe"/></svg></span><span class="sig sn"><svg class="ic " width="14" height="14"><use href="#i-mega"/></svg></span><span class="sig so"><svg class="ic " width="14" height="14"><use href="#i-target"/></svg></span><span class="sig sg"><svg class="ic " width="14" height="14"><use href="#i-users"/></svg></span><span class="sig sn"><svg class="ic " width="14" height="14"><use href="#i-cal"/></svg></span><span class="sig sn"><svg class="ic " width="14" height="14"><use href="#i-bot"/></svg></span><span class="sig sn"><span class="ai">AI</span><svg class="aisp" width="5" height="5" viewBox="0 0 8 8"><path d="M4 0Q4.5 3.5 8 4Q4.5 4.5 4 8Q3.5 4.5 0 4Q3.5 3.5 4 0Z" fill="currentColor"/></svg><i class="aidot"></i></span></div>
<div class="upd">4 days ago</div>
<div class="acts"><svg class="ic " width="16" height="16"><use href="#i-globe"/></svg><svg class="ic " width="16" height="16"><use href="#i-ext"/></svg><svg class="ic " width="16" height="16"><use href="#i-plus"/></svg></div>
</div><div class="row" style="top:651px">
<span class="cb" style="left:16px;top:20px"></span>
<div class="nm">Utah Surgical Arts, Wisdom Teeth and De...</div><div class="sub">Oral surgeon &bull; Provo, Utah</div>
<div class="ph"><svg class="ic phi" width="14" height="14"><use href="#i-phone"/></svg><span>(801) 356-2226</span></div>
<div class="rt"><svg class="ic star" width="15" height="15"><use href="#i-star"/></svg><b>5</b><span class="cnt">(890)</span></div>
<div class="gap">25</div>
<div class="sigs"><span class="sig sg"><svg class="ic " width="14" height="14"><use href="#i-globe"/></svg></span><span class="sig sn"><svg class="ic " width="14" height="14"><use href="#i-mega"/></svg></span><span class="sig sg"><svg class="ic " width="14" height="14"><use href="#i-target"/></svg></span><span class="sig sg"><svg class="ic " width="14" height="14"><use href="#i-users"/></svg></span><span class="sig sn"><svg class="ic " width="14" height="14"><use href="#i-cal"/></svg></span><span class="sig sn"><svg class="ic " width="14" height="14"><use href="#i-bot"/></svg></span><span class="sig sg"><span class="ai">AI</span><svg class="aisp" width="5" height="5" viewBox="0 0 8 8"><path d="M4 0Q4.5 3.5 8 4Q4.5 4.5 4 8Q3.5 4.5 0 4Q3.5 3.5 4 0Z" fill="currentColor"/></svg><i class="aidot"></i></span></div>
<div class="upd">1 week ago</div>
<div class="acts"><svg class="ic " width="16" height="16"><use href="#i-globe"/></svg><svg class="ic " width="16" height="16"><use href="#i-ext"/></svg><svg class="ic " width="16" height="16"><use href="#i-plus"/></svg></div>
</div>
  </div>
  <div class="sbar"><i class="sup"></i><i class="thumb"></i><i class="sdn"></i></div>
</div>
</body></html>
